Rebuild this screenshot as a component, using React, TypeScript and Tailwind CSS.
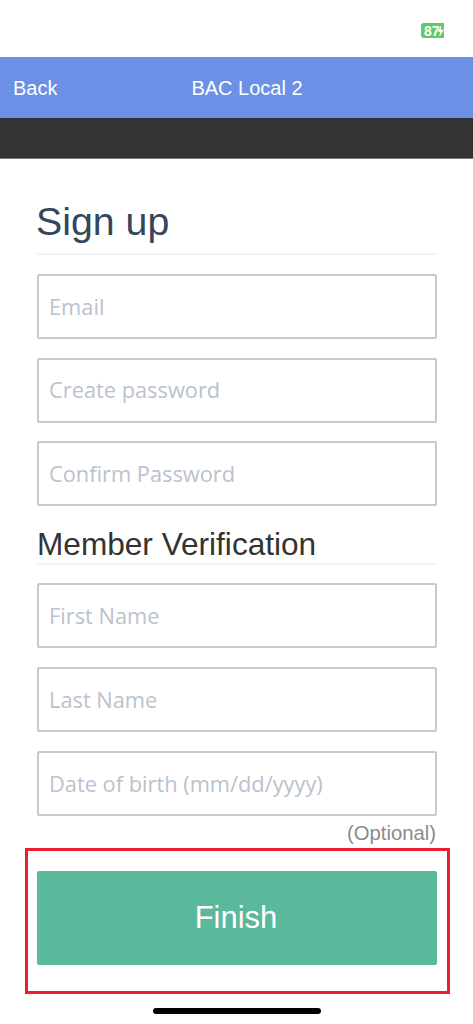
const FONT = "font-['Liberation_Sans',Arial,sans-serif]";

function Field({ placeholder }: { placeholder: string }) {
  return (
    <div className="h-[65px] border-2 border-[#c5cad1] rounded-[2px] bg-white pl-[10px] pt-[1px] flex items-center font-['Open_Sans',sans-serif] text-[21.8px] text-[#bac2cd]">
      {placeholder}
    </div>
  );
}

export default function App() {
  return (
    <div className={`w-[473px] h-[1024px] bg-white overflow-hidden flex flex-col ${FONT}`}>
      {/* status bar */}
      <div className="h-[57px] flex items-start justify-end pt-[23px] pr-[29px]">
        <div className="w-[23px] h-[15px] bg-[#5fc96b] rounded-l-[3px] flex items-center pl-[3px] text-[14px] leading-none font-bold text-white relative">
          87
          <svg viewBox="0 0 8 14" className="absolute right-0 top-[2px] w-[7px] h-[12px]" fill="#ffffff">
            <path d="M5 0 L0.5 8 L3.5 8 L2.5 14 L8 5.5 L4.5 5.5 Z" />
          </svg>
        </div>
      </div>

      {/* nav */}
      <div className="h-[61px] bg-[#6b90e6] relative flex items-center justify-center pl-[21px] text-white text-[20px]">
        <span className="absolute left-[13px]">Back</span>
        <span>BAC Local 2</span>
      </div>
      <div className="h-[41px] bg-[#333333] border-b border-[#777777]" />

      <div className="ml-[37px] w-[400px]">
        <h1 className="mt-[35px] h-[61px] text-[39.3px] leading-[54px] text-[#34465e] border-b-2 border-[#f1f2f3]">
          <span className="block -ml-px">Sign up</span>
        </h1>
        <div className="mt-[19px] flex flex-col gap-[18.5px]">
          <Field placeholder="Email" />
          <Field placeholder="Create password" />
          <Field placeholder="Confirm Password" />
        </div>
        <h2 className="mt-[18px] h-[41px] text-[31.6px] leading-[40px] text-[#333333] border-b-2 border-[#f1f2f3]">
          Member Verification
        </h2>
        <div className="mt-[18px] flex flex-col gap-[19px]">
          <Field placeholder="First Name" />
          <Field placeholder="Last Name" />
          <Field placeholder="Date of birth (mm/dd/yyyy)" />
        </div>
        <div className="text-right text-[20.3px] leading-[24px] mt-[5px] pr-[1px] text-[#8b8b8b]">(Optional)</div>
      </div>

      <div className="mt-[3px] ml-[25px] w-[425px] h-[146px] border-[3px] border-[#ee1c2e] pt-[20px] pl-[9px]">
        <div className="w-[400px] h-[94px] bg-[#5ab99c] rounded-[2px] flex items-center justify-center pr-[2px] pt-[1px] text-white text-[31px]">
          Finish
        </div>
      </div>

      <div className="mt-[14px] ml-[153px] w-[168px] h-[6px] rounded-full bg-black" />
    </div>
  );
}
